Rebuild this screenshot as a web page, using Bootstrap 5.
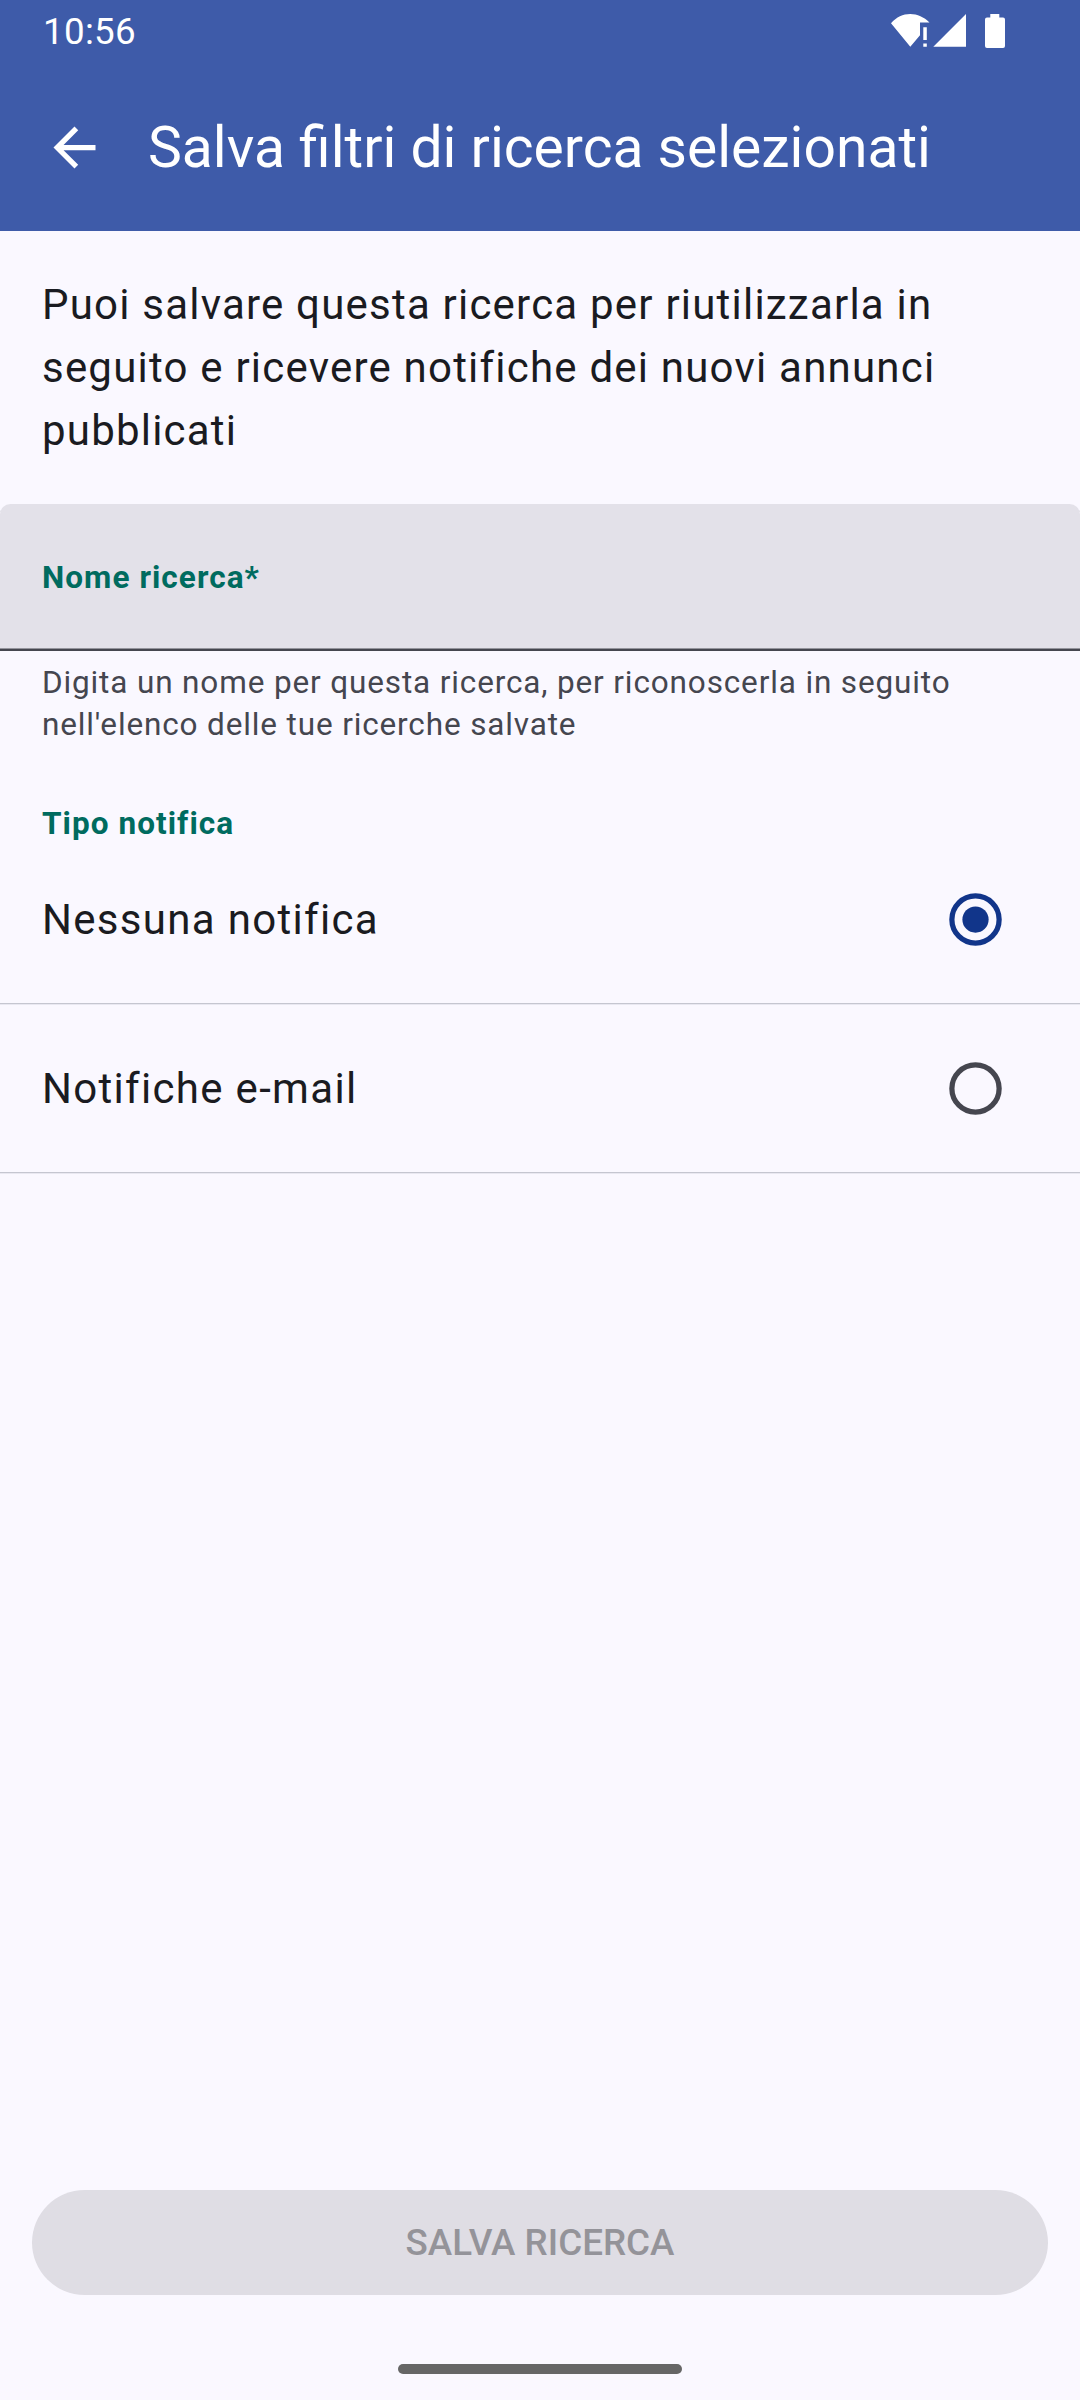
<!DOCTYPE html>
<html lang="it">
<head>
<meta charset="utf-8">
<meta name="viewport" content="width=device-width, initial-scale=1">
<title>Salva filtri di ricerca selezionati</title>
<link href="https://cdn.jsdelivr.net/npm/bootstrap@5.3.0/dist/css/bootstrap.min.css" rel="stylesheet">
<style>
  body { font-family: Roboto, "Noto Sans", sans-serif; background: #faf8ff; color: #1a1b21; }
  .screen { height: 2400px; }
  .app-header { background: #3e5ba9; height: 231px; }
  .status-bar { height: 63px; padding: 0 74px 0 43px; }
  .status-icons { margin-top: 14px; }
  .clock { font-size: 36.75px; line-height: 63px; letter-spacing: .3px; }
  .toolbar { height: 168px; padding-left: 43px; gap: 42px; }
  .page-title { font-size: 57px; line-height: 68px; font-weight: 400; padding-top: 2px; }
  .intro { font-size: 42px; line-height: 63px; letter-spacing: 1.21px; padding: 42px; }
  .name-field { height: 147px; background: #e3e1e9; border-radius: 10.5px 10.5px 0 0; padding: 0 42px; box-shadow: inset 0 -2px #45464f, inset 0 -3px #94949c; }
  .teal-label { color: #006b5f; font-size: 31.5px; font-weight: 700; line-height: 42px; letter-spacing: 1.05px; }
  .type-heading { line-height: 22px; padding: 67px 42px 0; }
  .helper { color: #45464f; font-size: 31.5px; line-height: 42px; letter-spacing: .86px; padding: 11px 42px 0; }
  .choice { height: 169px; padding: 0 73px 0 42px; font-size: 42px; letter-spacing: 1.31px; border-bottom: 1px solid #c5c6d0; box-shadow: 0 1px #e9e8f1; cursor: pointer; }
  .save-btn { height: 105px; border-radius: 53px; font-size: 36.75px; font-weight: 500; border: 0; }
  .save-btn:disabled { background: #dfdde4; color: #949399; opacity: 1; }
  .home-area { padding: 69px 0 26px; }
  .home-pill { width: 284px; height: 10px; border-radius: 5px; background: #666; }
</style>
<script src="https://cdn.jsdelivr.net/npm/bootstrap@5.3.0/dist/js/bootstrap.bundle.min.js"></script>
</head>
<body>
<div class="screen d-flex flex-column overflow-hidden">
  <header class="app-header text-white flex-shrink-0">
    <div class="status-bar d-flex justify-content-between align-items-start">
      <span class="clock">10:56</span>
      <svg class="status-icons" width="116" height="35" viewBox="0 0 116 35" fill="#fff" aria-hidden="true">
        <path d="M1 9.2C6.500 3 13 0 20.200 0S34 3 39.500 8.500H30V21.200L20.300 32.800Z"/>
        <path d="M33.300 13.300h3.500V26h-3.500zM33.300 29.600h3.500v3.200h-3.500zM43.300 32.800 76 0V32.800Z"/>
        <path d="M100.300 0h9v3.400h3.700a2 2 0 0 1 2 2V32a2 2 0 0 1-2 2H97a2 2 0 0 1-2-2V5.400a2 2 0 0 1 2-2h3.300z"/>
      </svg>
    </div>
    <div class="toolbar d-flex align-items-center">
      <svg width="63" height="63" viewBox="0 0 24 24" fill="#fff" aria-label="Indietro"><path d="M20 11H7.830l5.590-5.590L12 4l-8 8 8 8 1.410-1.410L7.830 13H20v-2z"/></svg>
      <h1 class="page-title mb-0">Salva filtri di ricerca selezionati</h1>
    </div>
  </header>
  <main class="flex-grow-1">
    <p class="intro mb-0">Puoi salvare questa ricerca per riutilizzarla in<br>seguito e ricevere notifiche dei nuovi annunci<br>pubblicati</p>
    <div class="name-field d-flex align-items-center"><span class="teal-label">Nome ricerca*</span></div>
    <p class="helper mb-0">Digita un nome per questa ricerca, per riconoscerla in seguito<br>nell'elenco delle tue ricerche salvate</p>
    <h2 class="teal-label type-heading mb-0">Tipo notifica</h2>
    <div role="radiogroup">
      <div class="choice d-flex align-items-center justify-content-between" role="radio" aria-checked="true">
        <span>Nessuna notifica</span>
        <svg width="63" height="63" viewBox="0 0 24 24"><circle cx="12" cy="12" r="9" fill="none" stroke="#11358a" stroke-width="2"/><circle cx="12" cy="12" r="5" fill="#11358a"/></svg>
      </div>
      <div class="choice d-flex align-items-center justify-content-between" role="radio" aria-checked="false">
        <span>Notifiche e-mail</span>
        <svg width="63" height="63" viewBox="0 0 24 24"><circle cx="12" cy="12" r="9" fill="none" stroke="#45464f" stroke-width="2"/></svg>
      </div>
    </div>
  </main>
  <footer class="d-flex flex-column flex-shrink-0">
    <div class="d-grid px-4 mx-2"><button class="btn save-btn" disabled>SALVA RICERCA</button></div>
    <div class="home-area d-flex justify-content-center"><div class="home-pill"></div></div>
  </footer>
</div>
</body>
</html>
